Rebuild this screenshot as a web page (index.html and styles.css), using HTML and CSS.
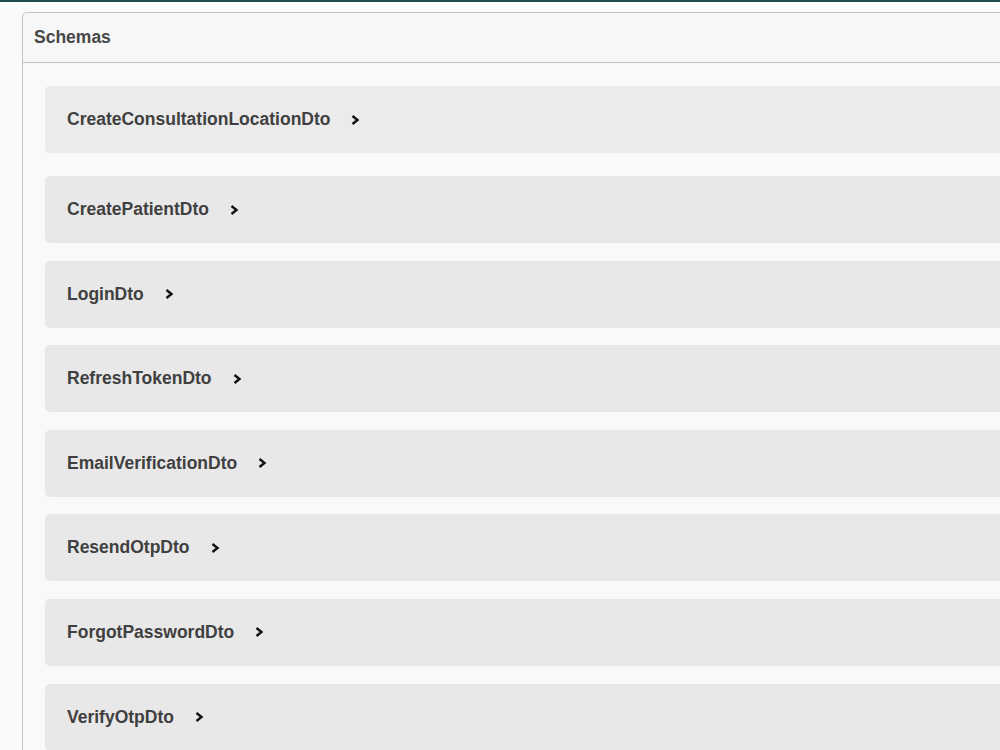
FILE: index.html
```html
<!DOCTYPE html>
<html lang="en">
<head>
    <meta charset="UTF-8"/>
    <title>Schemas</title>
    <link rel="stylesheet" href="styles.css">
</head>
<body>
<div class="topbar"></div>

<section class="models">
    <h4 class="models-title">Schemas</h4>

    <div class="models-body">
        <div class="model-row first">
            <span class="model-name">CreateConsultationLocationDto</span>
            <svg class="arrow" width="12" height="14" viewBox="0 0 12 14"><polyline points="3.5,3 8.5,7 3.5,11"/></svg>
        </div>
        <div class="model-row">
            <span class="model-name">CreatePatientDto</span>
            <svg class="arrow" width="12" height="14" viewBox="0 0 12 14"><polyline points="3.5,3 8.5,7 3.5,11"/></svg>
        </div>
        <div class="model-row">
            <span class="model-name">LoginDto</span>
            <svg class="arrow" width="12" height="14" viewBox="0 0 12 14"><polyline points="3.5,3 8.5,7 3.5,11"/></svg>
        </div>
        <div class="model-row">
            <span class="model-name">RefreshTokenDto</span>
            <svg class="arrow" width="12" height="14" viewBox="0 0 12 14"><polyline points="3.5,3 8.5,7 3.5,11"/></svg>
        </div>
        <div class="model-row">
            <span class="model-name">EmailVerificationDto</span>
            <svg class="arrow" width="12" height="14" viewBox="0 0 12 14"><polyline points="3.5,3 8.5,7 3.5,11"/></svg>
        </div>
        <div class="model-row">
            <span class="model-name">ResendOtpDto</span>
            <svg class="arrow" width="12" height="14" viewBox="0 0 12 14"><polyline points="3.5,3 8.5,7 3.5,11"/></svg>
        </div>
        <div class="model-row">
            <span class="model-name">ForgotPasswordDto</span>
            <svg class="arrow" width="12" height="14" viewBox="0 0 12 14"><polyline points="3.5,3 8.5,7 3.5,11"/></svg>
        </div>
        <div class="model-row">
            <span class="model-name">VerifyOtpDto</span>
            <svg class="arrow" width="12" height="14" viewBox="0 0 12 14"><polyline points="3.5,3 8.5,7 3.5,11"/></svg>
        </div>
    </div>
</section>
</body>
</html>
```

FILE: styles.css
```css
body {
    margin: 0;
    background: #fafafa;
    font-family: 'Liberation Sans', Arial, sans-serif;
    color: #404040;
    overflow: hidden;
}

.topbar {
    height: 2px;
    background: #1d4d51;
}

.models {
    width: 1200px;
    margin: 10px 0 0 22px;
    background: #f7f7f7;
    border: 1px solid #c4c4c4;
    border-radius: 5px;
}

.models-title {
    margin: 0;
    height: 49px;
    display: flex;
    align-items: center;
    padding-left: 11px;
    font-size: 17.5px;
    font-weight: 700;
    color: #474747;
    border-bottom: 1px solid #c4c4c4;
}

.models-body {
    padding: 23px 0 0 22px;
    background: #f9f9f9;
}

.model-row {
    height: 67px;
    display: flex;
    align-items: center;
    padding-left: 22px;
    margin-bottom: 17.6px;
    background: #e8e8e8;
    border-radius: 5px;
}

.model-row.first {
    background: #ebebeb;
    margin-bottom: 23px;
}

.model-name {
    font-size: 17.5px;
    font-weight: 700;
}

.arrow {
    margin-left: 19px;
    fill: none;
    stroke: #111;
    stroke-width: 2.4;
}
```
